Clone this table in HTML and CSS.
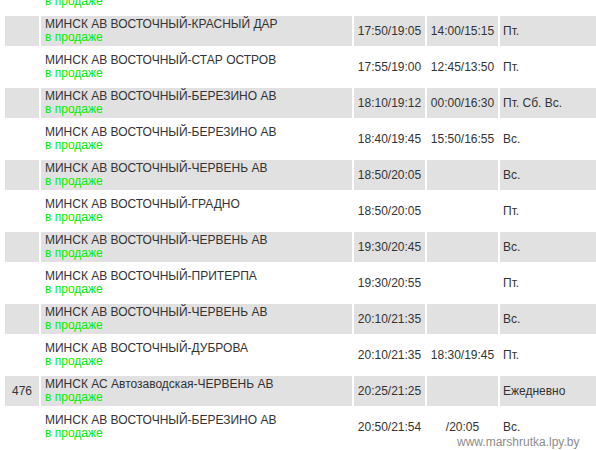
FILE: index.html
```html
<!DOCTYPE html>
<html>
<head>
<meta charset="utf-8">
<link rel="stylesheet" href="styles.css">
</head>
<body>
<div class="schedule">
  <div class="row">
    <div class="c num"></div>
    <div class="c name"><div class="route">&nbsp;</div><div class="sale">в продаже</div></div>
    <div class="c t"></div><div class="c t"></div><div class="c days"></div>
  </div>
  <div class="row alt">
    <div class="c num"></div>
    <div class="c name"><div class="route">МИНСК АВ ВОСТОЧНЫЙ-КРАСНЫЙ ДАР</div><div class="sale">в продаже</div></div>
    <div class="c t">17:50/19:05</div><div class="c t">14:00/15:15</div><div class="c days">Пт.</div>
  </div>
  <div class="row">
    <div class="c num"></div>
    <div class="c name"><div class="route">МИНСК АВ ВОСТОЧНЫЙ-СТАР ОСТРОВ</div><div class="sale">в продаже</div></div>
    <div class="c t">17:55/19:00</div><div class="c t">12:45/13:50</div><div class="c days">Пт.</div>
  </div>
  <div class="row alt">
    <div class="c num"></div>
    <div class="c name"><div class="route">МИНСК АВ ВОСТОЧНЫЙ-БЕРЕЗИНО АВ</div><div class="sale">в продаже</div></div>
    <div class="c t">18:10/19:12</div><div class="c t">00:00/16:30</div><div class="c days">Пт. Сб. Вс.</div>
  </div>
  <div class="row">
    <div class="c num"></div>
    <div class="c name"><div class="route">МИНСК АВ ВОСТОЧНЫЙ-БЕРЕЗИНО АВ</div><div class="sale">в продаже</div></div>
    <div class="c t">18:40/19:45</div><div class="c t">15:50/16:55</div><div class="c days">Вс.</div>
  </div>
  <div class="row alt">
    <div class="c num"></div>
    <div class="c name"><div class="route">МИНСК АВ ВОСТОЧНЫЙ-ЧЕРВЕНЬ АВ</div><div class="sale">в продаже</div></div>
    <div class="c t">18:50/20:05</div><div class="c t"></div><div class="c days">Вс.</div>
  </div>
  <div class="row">
    <div class="c num"></div>
    <div class="c name"><div class="route">МИНСК АВ ВОСТОЧНЫЙ-ГРАДНО</div><div class="sale">в продаже</div></div>
    <div class="c t">18:50/20:05</div><div class="c t"></div><div class="c days">Пт.</div>
  </div>
  <div class="row alt">
    <div class="c num"></div>
    <div class="c name"><div class="route">МИНСК АВ ВОСТОЧНЫЙ-ЧЕРВЕНЬ АВ</div><div class="sale">в продаже</div></div>
    <div class="c t">19:30/20:45</div><div class="c t"></div><div class="c days">Вс.</div>
  </div>
  <div class="row">
    <div class="c num"></div>
    <div class="c name"><div class="route">МИНСК АВ ВОСТОЧНЫЙ-ПРИТЕРПА</div><div class="sale">в продаже</div></div>
    <div class="c t">19:30/20:55</div><div class="c t"></div><div class="c days">Пт.</div>
  </div>
  <div class="row alt">
    <div class="c num"></div>
    <div class="c name"><div class="route">МИНСК АВ ВОСТОЧНЫЙ-ЧЕРВЕНЬ АВ</div><div class="sale">в продаже</div></div>
    <div class="c t">20:10/21:35</div><div class="c t"></div><div class="c days">Вс.</div>
  </div>
  <div class="row">
    <div class="c num"></div>
    <div class="c name"><div class="route">МИНСК АВ ВОСТОЧНЫЙ-ДУБРОВА</div><div class="sale">в продаже</div></div>
    <div class="c t">20:10/21:35</div><div class="c t">18:30/19:45</div><div class="c days">Пт.</div>
  </div>
  <div class="row alt">
    <div class="c num">476</div>
    <div class="c name"><div class="route">МИНСК АС Автозаводская-ЧЕРВЕНЬ АВ</div><div class="sale">в продаже</div></div>
    <div class="c t">20:25/21:25</div><div class="c t"></div><div class="c days">Ежедневно</div>
  </div>
  <div class="row">
    <div class="c num"></div>
    <div class="c name"><div class="route">МИНСК АВ ВОСТОЧНЫЙ-БЕРЕЗИНО АВ</div><div class="sale">в продаже</div></div>
    <div class="c t">20:50/21:54</div><div class="c t">/20:05</div><div class="c days">Вс.</div>
  </div>
</div>
<div class="watermark">www.marshrutka.lpy.by</div>
</body>
</html>
```
FILE: styles.css
```css
html, body {
  margin: 0;
  padding: 0;
  overflow: hidden;
  background: #fff;
}
body {
  width: 596px;
  height: 450px;
  position: relative;
  font-family: "Liberation Sans", Arial, sans-serif;
  font-size: 12px;
  color: #333;
}
.schedule {
  margin-top: -20px;
  padding-left: 5px;
  display: flex;
  flex-direction: column;
  gap: 6px;
}
.row {
  display: grid;
  grid-template-columns: 34px 311px 71px 71px 96px;
  column-gap: 2px;
  height: 30px;
}
.c {
  display: flex;
  flex-direction: column;
  justify-content: center;
  line-height: 13px;
  white-space: nowrap;
}
.row.alt .c {
  background: #e1e1e1;
}
.num {
  align-items: center;
}
.name {
  padding-left: 4px;
}
.t {
  align-items: center;
}
.days {
  padding-left: 3px;
}
.sale {
  color: #00ee00;
}
.watermark {
  position: absolute;
  left: 457px;
  top: 435px;
  color: #8c8c8c;
  line-height: 14px;
}
```
